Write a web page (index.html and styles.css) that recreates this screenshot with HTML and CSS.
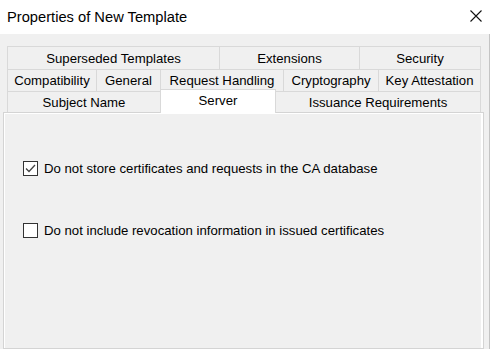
FILE: index.html
```html
<!DOCTYPE html>
<html lang="en">
<head>
  <meta charset="UTF-8">
  <title>Properties of New Template</title>
  <link rel="stylesheet" href="styles.css">
</head>
<body>
  <div class="window">
    <div class="titlebar">
      <span class="title">Properties of New Template</span>
      <svg class="close" width="12" height="12" viewBox="0 0 12 12">
        <path d="M0.5 0.5 L11.5 11.5 M11.5 0.5 L0.5 11.5" stroke="#111" stroke-width="1.1" fill="none"/>
      </svg>
    </div>
    <div class="content">
      <div class="tabs">
        <div class="tab-row row-1">
          <div class="tab">Superseded Templates</div>
          <div class="tab">Extensions</div>
          <div class="tab">Security</div>
        </div>
        <div class="tab-row row-2">
          <div class="tab">Compatibility</div>
          <div class="tab">General</div>
          <div class="tab">Request Handling</div>
          <div class="tab">Cryptography</div>
          <div class="tab">Key Attestation</div>
        </div>
        <div class="tab-row row-3">
          <div class="tab">Subject Name</div>
          <div class="tab active">Server</div>
          <div class="tab">Issuance Requirements</div>
        </div>
      </div>
      <div class="panel">
        <label class="option">
          <span class="box">
            <svg width="13" height="13" viewBox="0 0 13 13">
              <path d="M2 6.5 L5 9.5 L11 3" stroke="#444" stroke-width="1.3" fill="none"/>
            </svg>
          </span>
          <span>Do not store certificates and requests in the CA database</span>
        </label>
        <label class="option">
          <span class="box"></span>
          <span>Do not include revocation information in issued certificates</span>
        </label>
      </div>
    </div>
  </div>
</body>
</html>
```

FILE: styles.css
```css
* {
  box-sizing: border-box;
}
body {
  margin: 0;
  font-family: "Liberation Sans", Arial, sans-serif;
  color: #000;
  background: #f0f0f0;
}
.window {
  width: 490px;
  height: 349px;
  overflow: hidden;
  display: flex;
  flex-direction: column;
}
.titlebar {
  height: 34px;
  background: #fff;
  display: flex;
  align-items: center;
  justify-content: space-between;
  padding: 0 8px 1px 7px;
}
.title {
  font-size: 14.7px;
}
.close {
  margin-top: -2px;
}
.content {
  flex: 1;
  background: #f0f0f0;
  padding: 12px 5px 0 3px;
  border-right: 1px solid #c4c4c4;
  display: flex;
  flex-direction: column;
}
.tabs {
  margin: 0 3px 0 4px;
  font-size: 13.2px;
}
.tab-row {
  display: grid;
}
.row-1 {
  height: 23px;
  grid-template-columns: 212px 140px 1fr;
}
.row-2 {
  height: 22px;
  grid-template-columns: 89px 64px 123px 95px 1fr;
}
.row-3 {
  height: 21px;
  grid-template-columns: 153px 116px 1fr;
}
.tab {
  display: flex;
  align-items: center;
  justify-content: center;
  border-top: 1px solid #d9d9d9;
  border-left: 1px solid #d9d9d9;
  background: #f0f0f0;
  white-space: nowrap;
}
.tab:last-child {
  border-right: 1px solid #d9d9d9;
}
.tab.active {
  background: #fff;
  margin-top: -2px;
  margin-bottom: -1px;
  border-right: 1px solid #d9d9d9;
  position: relative;
  z-index: 1;
  padding-bottom: 2px;
}
.tab.active + .tab {
  border-left: none;
}
.panel {
  flex: 1;
  border: 1px solid #d4d4d4;
  box-shadow: inset 1px 1px 0 #fff, inset -2px 0 0 #fff;
  padding: 48px 0 0 19px;
  display: flex;
  flex-direction: column;
  gap: 47px;
  font-size: 13.2px;
}
.option {
  display: flex;
  align-items: center;
  height: 15px;
  gap: 6px;
}
.box {
  width: 15px;
  height: 15px;
  border: 1px solid #333;
  background: #fff;
  display: flex;
  align-items: center;
  justify-content: center;
}
```
